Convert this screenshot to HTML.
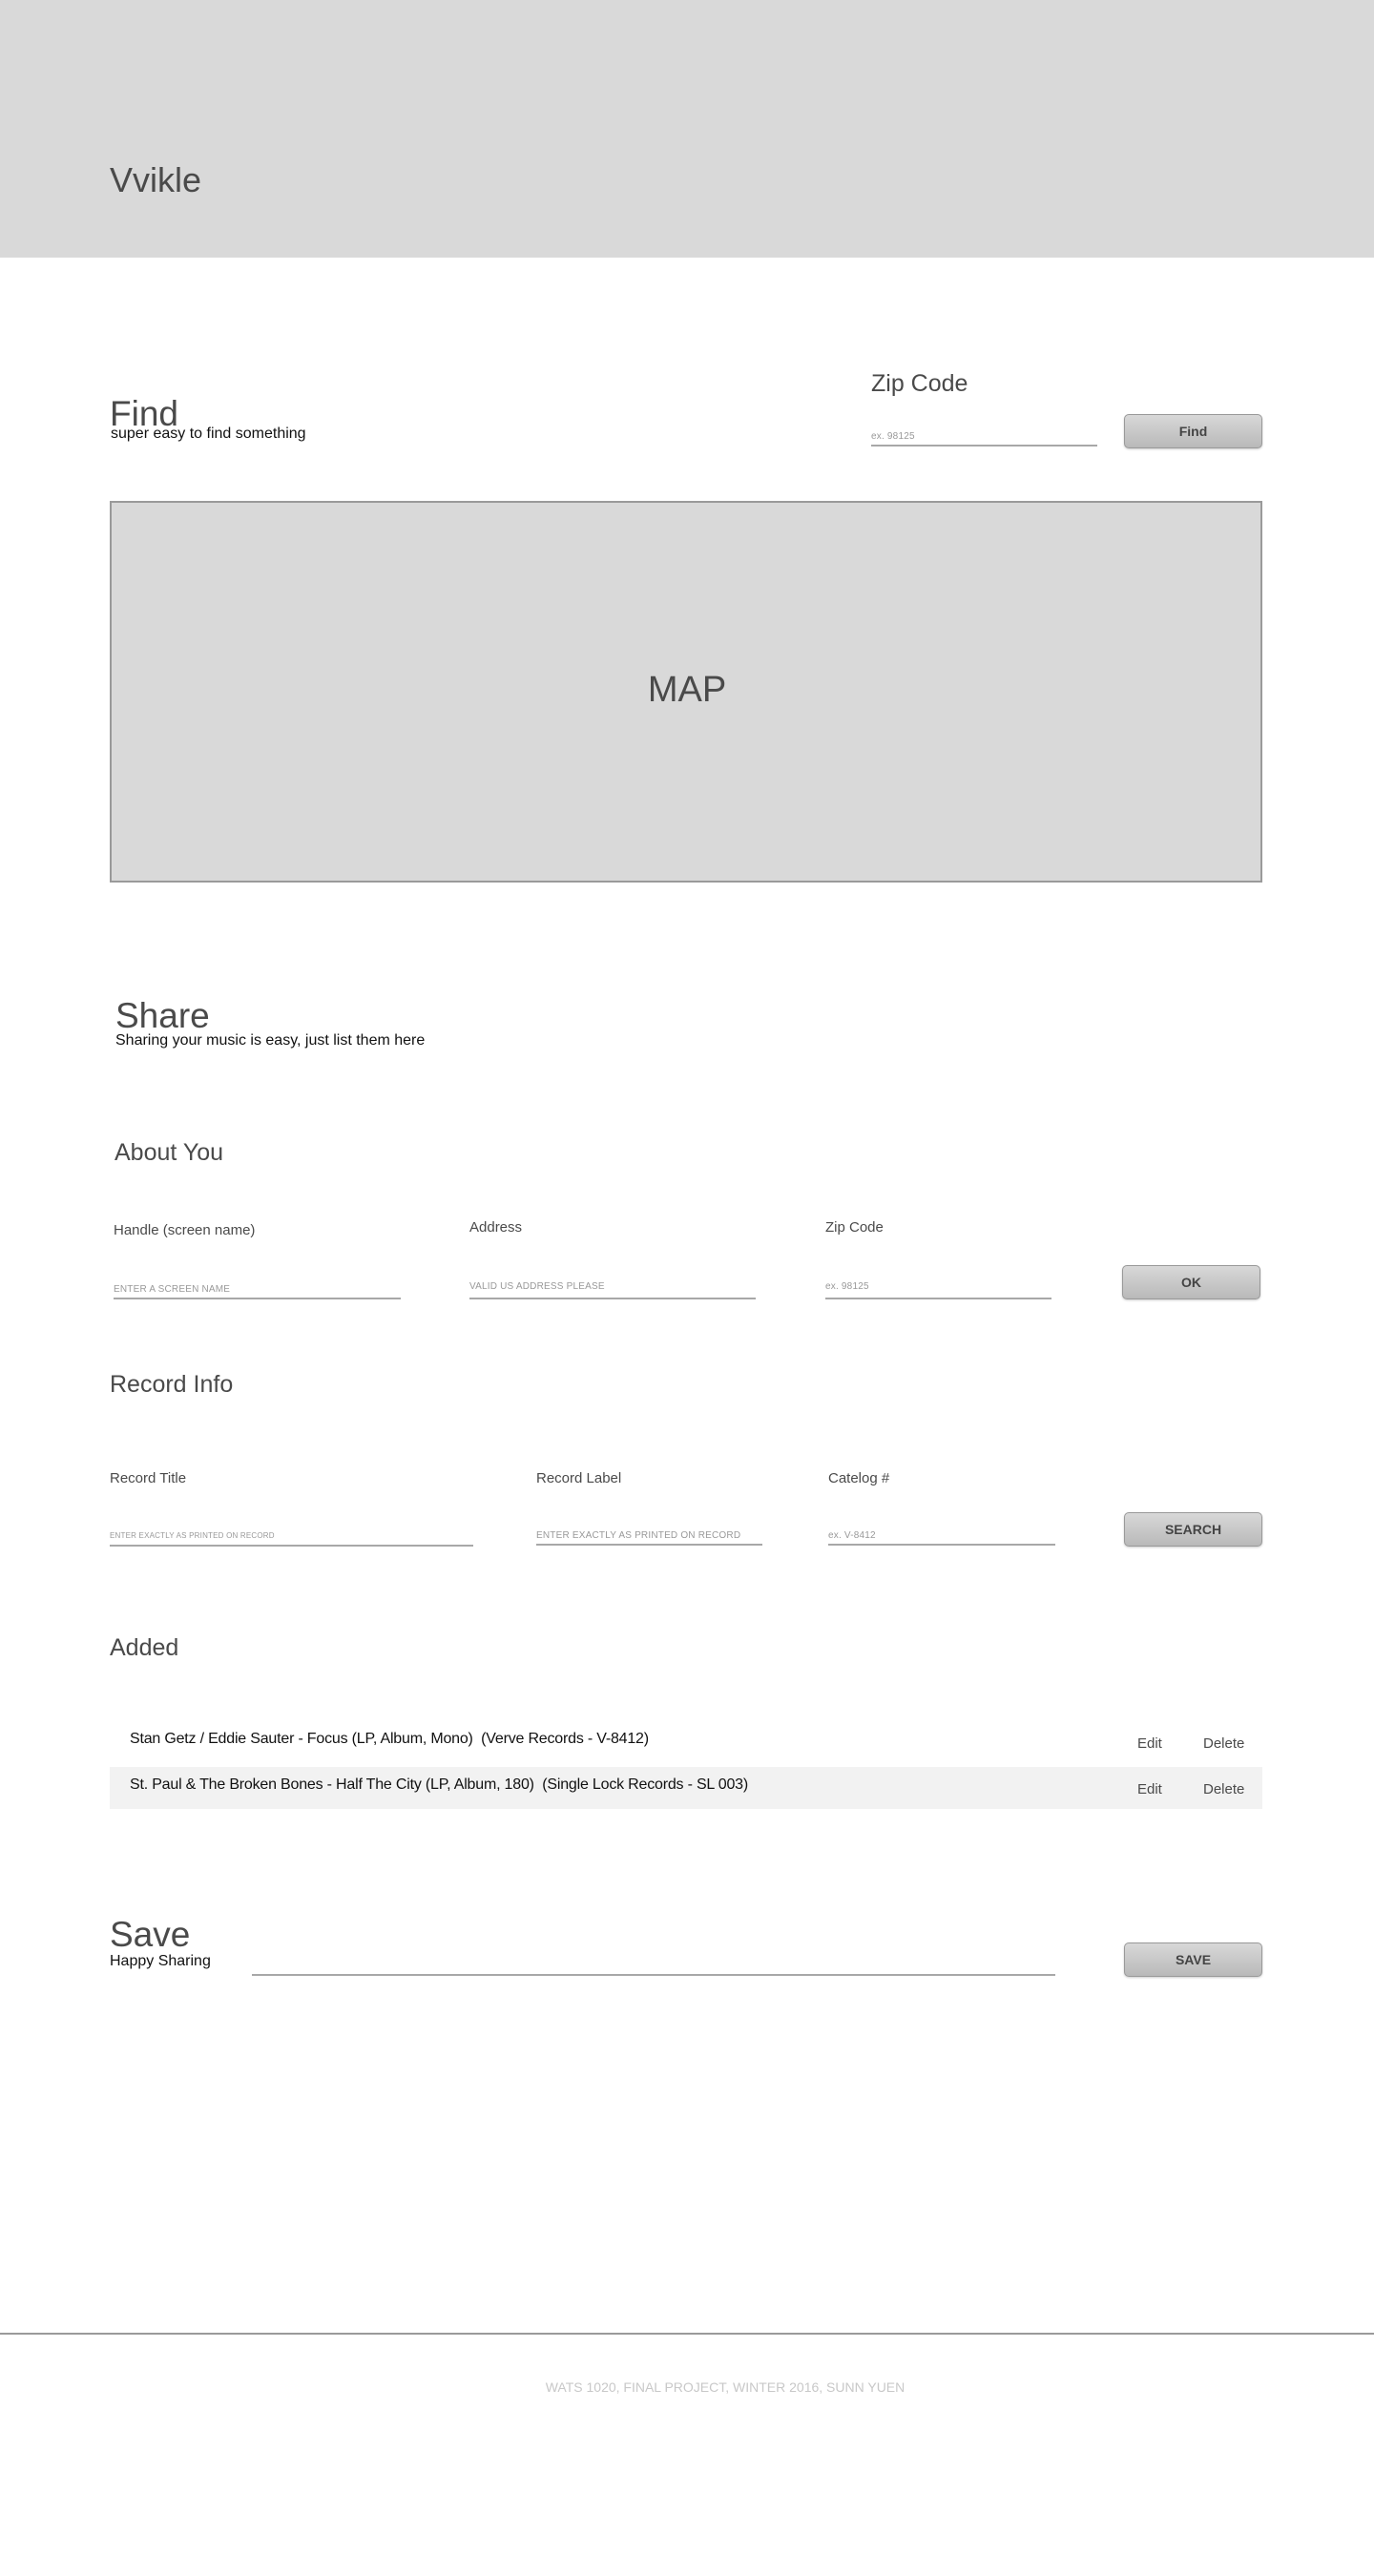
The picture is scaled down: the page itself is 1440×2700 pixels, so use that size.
<!DOCTYPE html>
<html><head><meta charset="utf-8"><style>
*{margin:0;padding:0;box-sizing:border-box}
body{width:1440px;height:2700px;position:relative;background:#fff;font-family:"Liberation Sans",sans-serif;color:#4a4a4a;overflow:hidden}
.a{position:absolute;line-height:1;white-space:nowrap}
.ln{position:absolute;height:2px;background:#a8a8a8}
.ph{position:absolute;line-height:1;font-size:10px;color:#999;white-space:nowrap;letter-spacing:0.2px}
.btn{position:absolute;width:145px;height:36px;border:1px solid #999;border-radius:5px;background:linear-gradient(#d8d8d8,#b9b9b9);box-shadow:0 1px 2px rgba(0,0,0,.2);font-weight:bold;font-size:14px;color:#444;display:flex;align-items:center;justify-content:center}
.lab{font-size:15px;color:#4a4a4a}
.sub{font-size:16px;color:#111}
.h2{font-size:25px}
</style></head><body>
<div style="position:absolute;left:0;top:0;width:1440px;height:270px;background:#d9d9d9"></div>
<div class="a" style="left:115px;top:171px;font-size:36px">Vvikle</div>

<div class="a" style="left:115px;top:415px;font-size:37px">Find</div>
<div class="a sub" style="left:116px;top:447px">super easy to find something</div>
<div class="a" style="left:913px;top:390px;font-size:25px">Zip Code</div>
<div class="ph" style="left:913px;top:453px">ex. 98125</div>
<div class="ln" style="left:913px;top:466px;width:237px"></div>
<div class="btn" style="left:1178px;top:434px">Find</div>

<div style="position:absolute;left:115px;top:525px;width:1208px;height:400px;background:#d9d9d9;border:2px solid #9a9a9a"></div>
<div class="a" style="left:0;width:1440px;text-align:center;top:704px;font-size:38px">MAP</div>

<div class="a" style="left:121px;top:1046px;font-size:37px">Share</div>
<div class="a sub" style="left:121px;top:1083px">Sharing your music is easy, just list them here</div>

<div class="a h2" style="left:120px;top:1196px">About You</div>
<div class="a lab" style="left:119px;top:1282px">Handle (screen name)</div>
<div class="a lab" style="left:492px;top:1279px">Address</div>
<div class="a lab" style="left:865px;top:1279px">Zip Code</div>
<div class="ph" style="left:119px;top:1347px">ENTER A SCREEN NAME</div>
<div class="ph" style="left:492px;top:1344px">VALID US ADDRESS PLEASE</div>
<div class="ph" style="left:865px;top:1344px">ex. 98125</div>
<div class="ln" style="left:119px;top:1360px;width:301px"></div>
<div class="ln" style="left:492px;top:1360px;width:300px"></div>
<div class="ln" style="left:865px;top:1360px;width:237px"></div>
<div class="btn" style="left:1176px;top:1326px">OK</div>

<div class="a h2" style="left:115px;top:1439px">Record Info</div>
<div class="a lab" style="left:115px;top:1542px">Record Title</div>
<div class="a lab" style="left:562px;top:1542px">Record Label</div>
<div class="a lab" style="left:868px;top:1542px">Catelog #</div>
<div class="ph" style="left:115px;top:1606px;font-size:8px">ENTER EXACTLY AS PRINTED ON RECORD</div>
<div class="ph" style="left:562px;top:1605px">ENTER EXACTLY AS PRINTED ON RECORD</div>
<div class="ph" style="left:868px;top:1605px">ex. V-8412</div>
<div class="ln" style="left:115px;top:1619px;width:381px"></div>
<div class="ln" style="left:562px;top:1618px;width:237px"></div>
<div class="ln" style="left:868px;top:1618px;width:238px"></div>
<div class="btn" style="left:1178px;top:1585px">SEARCH</div>

<div class="a h2" style="left:115px;top:1715px">Added</div>
<div style="position:absolute;left:115px;top:1852px;width:1208px;height:44px;background:#f2f2f2"></div>
<div class="a" style="left:136px;top:1815px;font-size:16px;color:#111;letter-spacing:-0.2px">Stan Getz / Eddie Sauter - Focus (LP, Album, Mono)&nbsp; (Verve Records - V-8412)</div>
<div class="a" style="left:136px;top:1863px;font-size:16px;color:#111;letter-spacing:-0.2px">St. Paul &amp; The Broken Bones - Half The City (LP, Album, 180)&nbsp; (Single Lock Records - SL 003)</div>
<div class="a lab" style="left:1192px;top:1820px">Edit</div>
<div class="a lab" style="left:1261px;top:1820px">Delete</div>
<div class="a lab" style="left:1192px;top:1868px">Edit</div>
<div class="a lab" style="left:1261px;top:1868px">Delete</div>

<div class="a" style="left:115px;top:2009px;font-size:37px">Save</div>
<div class="a sub" style="left:115px;top:2048px">Happy Sharing</div>
<div class="ln" style="left:264px;top:2069px;width:842px"></div>
<div class="btn" style="left:1178px;top:2036px">SAVE</div>

<div style="position:absolute;left:0;top:2445px;width:1440px;height:2px;background:#9a9a9a"></div>
<div class="a" style="left:0;width:1520px;text-align:center;top:2495px;font-size:14px;color:#c8c8c8">WATS 1020, FINAL PROJECT, WINTER 2016, SUNN YUEN</div>
</body></html>
